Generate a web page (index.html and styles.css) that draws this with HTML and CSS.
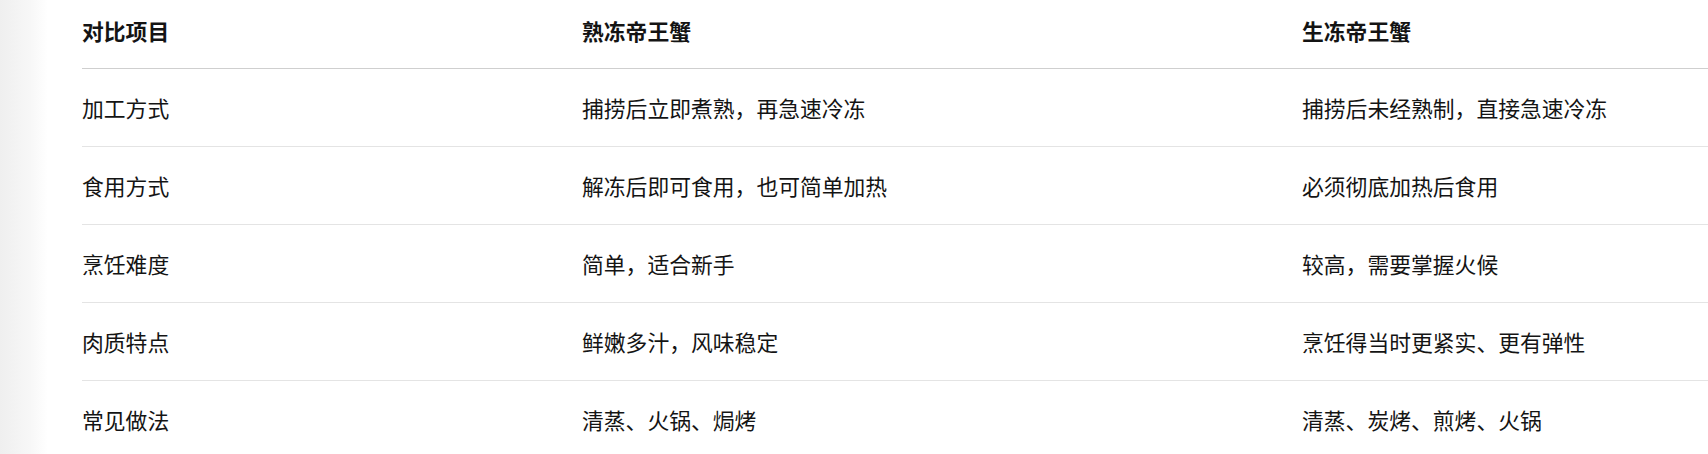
FILE: index.html
```html
<!DOCTYPE html>
<html lang="zh-CN">
<head>
<meta charset="utf-8">
<title>熟冻与生冻帝王蟹对比</title>
<link rel="stylesheet" href="styles.css">
</head>
<body>
<div class="page">
  <table class="compare">
    <colgroup>
      <col class="c1"><col class="c2"><col class="c3">
    </colgroup>
    <thead>
      <tr><th>对比项目</th><th>熟冻帝王蟹</th><th>生冻帝王蟹</th></tr>
    </thead>
    <tbody>
      <tr><td>加工方式</td><td>捕捞后立即煮熟，再急速冷冻</td><td>捕捞后未经熟制，直接急速冷冻</td></tr>
      <tr><td>食用方式</td><td>解冻后即可食用，也可简单加热</td><td>必须彻底加热后食用</td></tr>
      <tr><td>烹饪难度</td><td>简单，适合新手</td><td>较高，需要掌握火候</td></tr>
      <tr><td>肉质特点</td><td>鲜嫩多汁，风味稳定</td><td>烹饪得当时更紧实、更有弹性</td></tr>
      <tr><td>常见做法</td><td>清蒸、火锅、焗烤</td><td>清蒸、炭烤、煎烤、火锅</td></tr>
    </tbody>
  </table>
</div>
</body>
</html>
```

FILE: styles.css
```css
html, body {
  margin: 0;
  padding: 0;
  overflow: hidden;
}
body {
  background: linear-gradient(to right, #efefef 0px, #f7f7f7 30px, #ffffff 48px);
  font-family: "Noto Sans CJK SC", "Noto Sans", sans-serif;
  color: #141414;
  width: 1708px;
  height: 454px;
}
.page {
  padding-left: 82px;
}
.compare {
  border-collapse: collapse;
  table-layout: fixed;
  width: 1626px;
  font-size: 21.8px;
}
.c1 { width: 500px; }
.c2 { width: 720px; }
.c3 { width: 406px; }
.compare th,
.compare td {
  text-align: left;
  padding: 0;
  white-space: nowrap;
  vertical-align: middle;
  line-height: 30px;
}
.compare th {
  font-weight: 700;
  height: 61px;
  padding-bottom: 7px;
  border-bottom: 1px solid #cfcfcf;
}
.compare td {
  font-weight: 400;
  height: 77px;
  border-bottom: 1px solid #e4e4e4;
}
```
